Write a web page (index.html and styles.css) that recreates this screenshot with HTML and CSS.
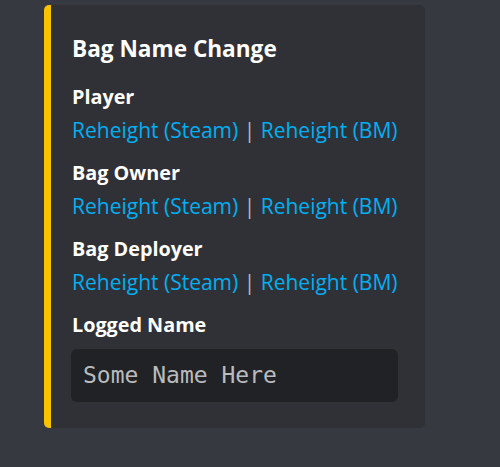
FILE: index.html
```html
<!DOCTYPE html>
<html>
<head>
<meta charset="utf-8">
<link rel="stylesheet" href="styles.css">
</head>
<body>
<div class="embed">
  <div class="title">Bag Name Change</div>
  <div class="field">
    <div class="name">Player</div>
    <div class="value"><a class="link">Reheight (Steam)</a> <span class="sep">|</span> <a class="link">Reheight (BM)</a></div>
  </div>
  <div class="field">
    <div class="name">Bag Owner</div>
    <div class="value"><a class="link">Reheight (Steam)</a> <span class="sep">|</span> <a class="link">Reheight (BM)</a></div>
  </div>
  <div class="field">
    <div class="name">Bag Deployer</div>
    <div class="value"><a class="link">Reheight (Steam)</a> <span class="sep">|</span> <a class="link">Reheight (BM)</a></div>
  </div>
  <div class="field">
    <div class="name">Logged Name</div>
    <div class="code">Some Name Here</div>
  </div>
</div>
</body>
</html>
```
FILE: styles.css
```css
html, body {
  margin: 0;
  padding: 0;
  background: #36393f;
  height: 100%;
}
body {
  padding-top: 5px;
  box-sizing: border-box;
}
.embed {
  margin-left: 44px;
  width: 381px;
  box-sizing: border-box;
  background: #2f3136;
  border-left: 7px solid #fac300;
  border-radius: 5px;
  padding: 30px 27px 26px 21px;
  display: flex;
  flex-direction: column;
  gap: 20px;
  font-family: "Open Sans", "Noto Sans", sans-serif;
}
.title {
  color: #ffffff;
  font-weight: 700;
  font-size: 22.6px;
  line-height: 28px;
  margin-bottom: 3px;
}
.field {
  display: flex;
  flex-direction: column;
}
.name {
  color: #ffffff;
  font-weight: 700;
  font-size: 19.8px;
  line-height: 22px;
  margin-bottom: 10px;
}
.value {
  color: #dcddde;
  font-size: 21px;
  line-height: 24px;
  white-space: nowrap;
}
.link {
  color: #00aff4;
}
.sep {
  color: #b9bbbe;
}
.field:last-child .name {
  margin-bottom: 13px;
}
.code {
  margin-left: -1px;
  background: #202225;
  border-radius: 6px;
  height: 53px;
  box-sizing: border-box;
  padding: 13px 12px;
  font-family: "DejaVu Sans Mono", monospace;
  font-size: 23px;
  line-height: 27px;
  color: #b9bbbe;
}
```
